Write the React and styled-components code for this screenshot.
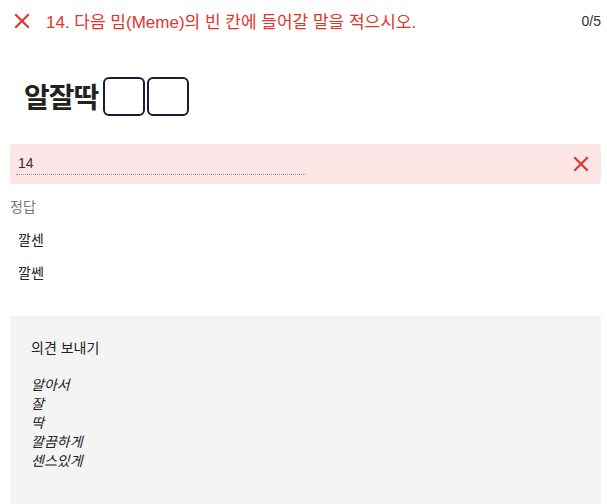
import React from 'react'
import styled, { createGlobalStyle } from 'styled-components'

const GlobalStyle = createGlobalStyle`
  body {
    margin: 0;
    background: #fff;
    font-family: "Liberation Sans", "Noto Sans CJK KR", sans-serif;
    color: #222;
  }
  * {
    box-sizing: border-box;
  }
`

const Page = styled.div`
  padding: 0 6px 0 10px;
`

const Header = styled.div`
  display: flex;
  align-items: center;
  height: 41px;
  padding-left: 4px;
`

const Title = styled.div`
  flex: 1;
  margin-left: 16px;
  font-size: 17px;
  color: #e0352b;
`

const Score = styled.div`
  font-size: 14px;
  color: #333;
`

const MemeBox = styled.div`
  display: flex;
  align-items: center;
  height: 100px;
  padding: 10px 0 0 14px;
`

const MemeText = styled.span`
  font-size: 28px;
  font-weight: 700;
  color: #222;
  letter-spacing: -1px;
  margin-right: 5px;
`

const Blank = styled.span`
  width: 42px;
  height: 39px;
  border: 2px solid #1b1b36;
  border-radius: 6px;
  margin-right: 2px;
`

const AnswerBox = styled.div`
  display: flex;
  align-items: center;
  height: 40px;
  margin-top: 3px;
  padding: 0 12px 0 6px;
  background: #fce6e5;
  border-radius: 4px;
`

const AnswerText = styled.div`
  width: 290px;
  padding: 2px 0 3px 2px;
  border-bottom: 1px dotted #a58a8a;
  font-size: 14px;
  color: #333;
`

const Spacer = styled.div`
  flex: 1;
`

const Label = styled.div`
  margin-top: 12px;
  font-size: 14px;
  color: #777;
`

const CorrectList = styled.div`
  display: flex;
  flex-direction: column;
  gap: 14px;
  margin-top: 15px;
  padding-left: 8px;
`

const Correct = styled.div`
  font-size: 14px;
  line-height: 19px;
  color: #222;
`

const Feedback = styled.div`
  margin-top: 33px;
  min-height: 188px;
  padding: 21px 21px;
  background: #f4f4f4;
`

const FeedbackTitle = styled.div`
  font-size: 14px;
  color: #222;
`

const FeedbackBody = styled.div`
  margin-top: 19px;
  font-size: 14px;
  line-height: 19px;
  font-style: italic;
  color: #222;
`

function Cross({ size = 16 }) {
  return (
    <svg width={size} height={size} viewBox="0 0 16 16">
      <path d="M2 2 L14 14 M14 2 L2 14" stroke="#dc3b33" strokeWidth="2.2" strokeLinecap="square" fill="none" />
    </svg>
  )
}

const feedbackLines = ['알아서', '잘', '딱', '깔끔하게', '센스있게']

export default function App() {
  return (
    <Page>
      <GlobalStyle />
      <Header>
        <Cross size={16} />
        <Title>14. 다음 밈(Meme)의 빈 칸에 들어갈 말을 적으시오.</Title>
        <Score>0/5</Score>
      </Header>
      <MemeBox>
        <MemeText>알잘딱</MemeText>
        <Blank />
        <Blank />
      </MemeBox>
      <AnswerBox>
        <AnswerText>14</AnswerText>
        <Spacer />
        <Cross size={16} />
      </AnswerBox>
      <Label>정답</Label>
      <CorrectList>
        <Correct>깔센</Correct>
        <Correct>깔쎈</Correct>
      </CorrectList>
      <Feedback>
        <FeedbackTitle>의견 보내기</FeedbackTitle>
        <FeedbackBody>
          {feedbackLines.map((line) => (
            <div key={line}>{line}</div>
          ))}
        </FeedbackBody>
      </Feedback>
    </Page>
  )
}
